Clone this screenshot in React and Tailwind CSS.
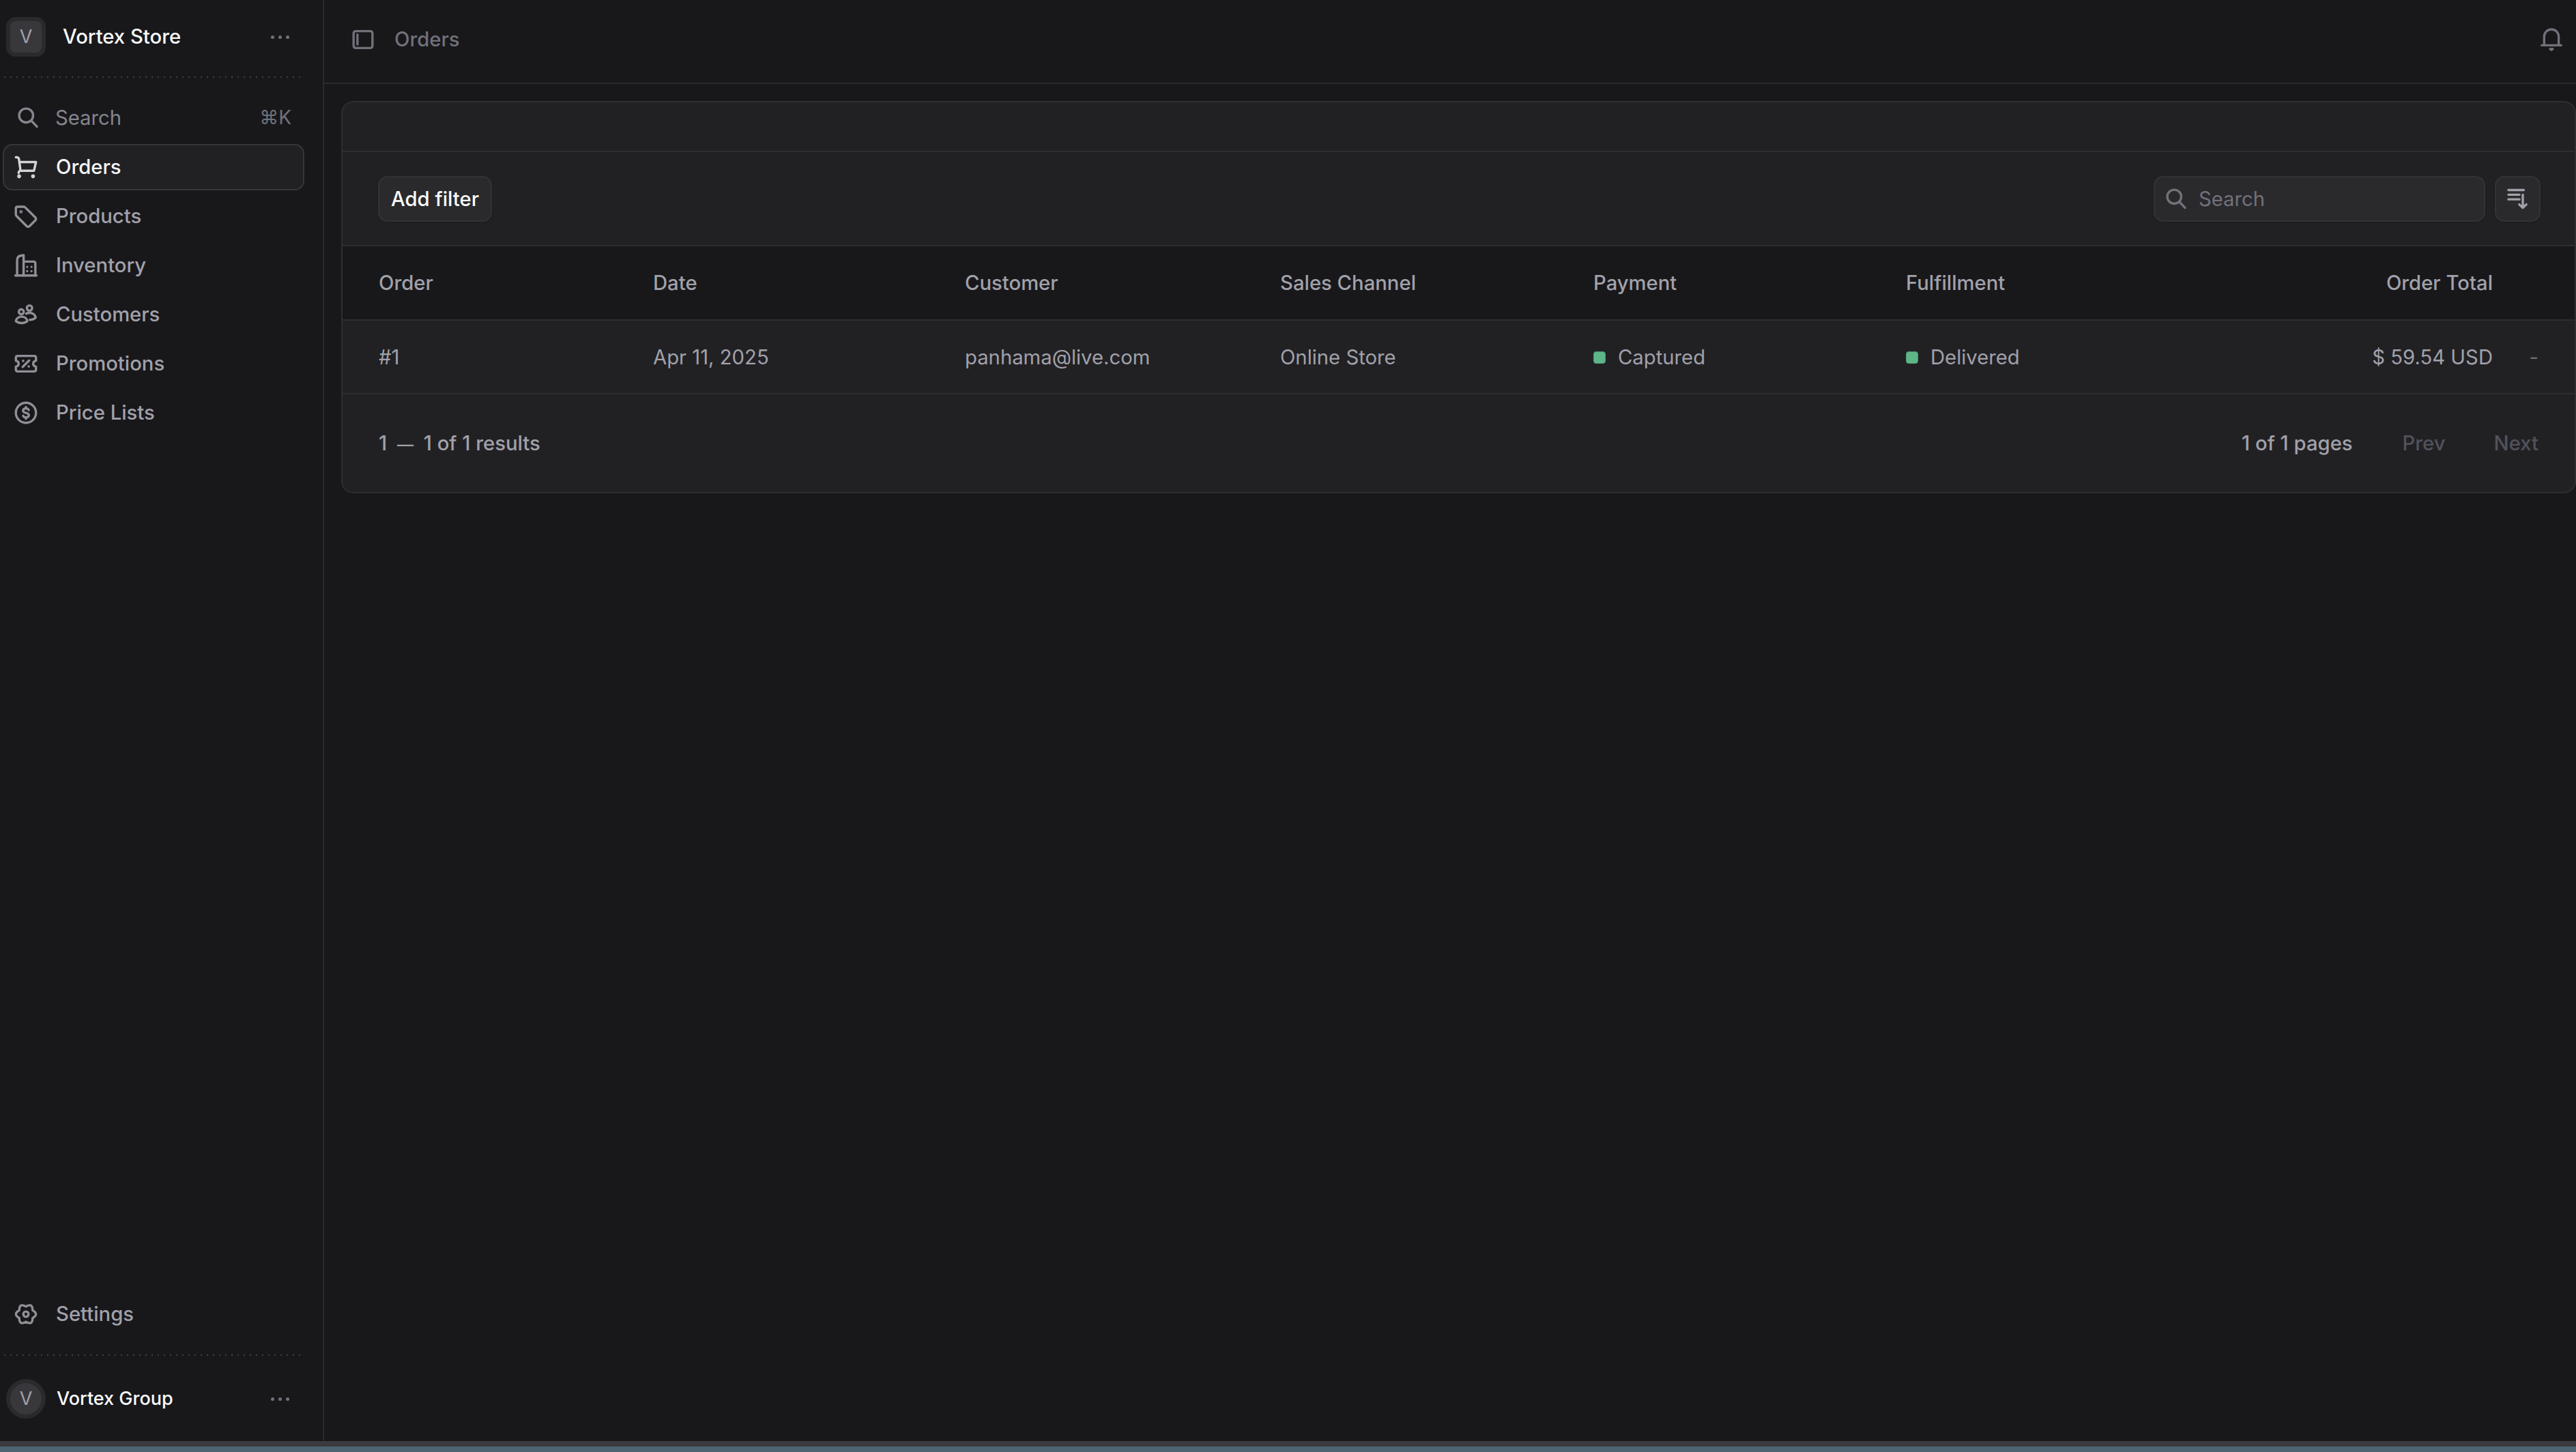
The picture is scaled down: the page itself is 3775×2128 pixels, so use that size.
import React from 'react';

// drawn on Medusa's 15x15 icon grid
const Icon = ({ className = '', children }) => (
  <svg
    viewBox="0 0 15 15"
    fill="none"
    stroke="currentColor"
    strokeWidth="1.5"
    strokeLinecap="round"
    strokeLinejoin="round"
    className={`w-[34px] h-[34px] shrink-0 ${className}`}
  >
    {children}
  </svg>
);

const SearchIcon = ({ className }) => (
  <Icon className={className}>
    <circle cx="6.300" cy="6.300" r="4.500" />
    <path d="M9.700 9.700 13.300 13.500" />
  </Icon>
);

const CartIcon = () => (
  <Icon>
    <path d="M1 1.100h.6c.7 0 1.200.5 1.400 1.200L4 9.800" />
    <path d="M3.300 4.200H14l-1.300 5.600H4c-.7 0-1.200.6-1.200 1.500" />
    <circle cx="3.100" cy="13.400" r=".5" fill="currentColor" />
    <circle cx="12.100" cy="13.400" r=".5" fill="currentColor" />
  </Icon>
);

const TagIcon = () => (
  <Icon>
    <path d="M2 1.300h4c.4 0 .7.1 1 .4l6.600 6.600c.5.5.5 1.300 0 1.800l-3.800 3.800c-.5.5-1.300.5-1.800 0L1.400 7.300C1.100 7 1 6.700 1 6.300v-4c0-.6.4-1 1-1z" />
    <circle cx="4.300" cy="4.600" r=".3" fill="currentColor" />
  </Icon>
);

const BuildingsIcon = () => (
  <Icon>
    <path d="M.7 14h13.600" />
    <path d="M1.800 14V4.200c0-1.500.9-2.700 2.200-3L6 .9V14" />
    <path d="M6 5h6.500c.6 0 1.100.5 1.100 1.100V14" />
    <g stroke="none" fill="currentColor">
      <circle cx="8.300" cy="8.400" r=".7" />
      <circle cx="11.100" cy="8.400" r=".7" />
      <circle cx="8.300" cy="11.200" r=".7" />
      <circle cx="11.100" cy="11.200" r=".7" />
    </g>
  </Icon>
);

const UsersIcon = () => (
  <Icon>
    <circle cx="4.500" cy="5.700" r="1.600" />
    <circle cx="9.800" cy="3.300" r="1.700" />
    <path d="M1 11.700c.3-1.700 1.800-2.800 3.700-2.800s3.400 1.100 3.700 2.800c-.9.900-2.200 1.300-3.700 1.300S1.900 12.600 1 11.700z" />
    <path d="M7.700 6.900c.6-.3 1.300-.5 2-.5 2.100 0 3.700 1.300 4.100 3-.5.700-2 1.400-3.800 1.500" />
  </Icon>
);

const ReceiptIcon = () => (
  <Icon>
    <path d="M2.200 2.500h10.600c.7 0 1.200.5 1.200 1.200v1.900c-1 .2-1.800 1-1.800 1.900s.8 1.700 1.800 1.900v1.900c0 .7-.5 1.200-1.200 1.200H2.200c-.7 0-1.200-.5-1.200-1.200V9.400c1-.2 1.800-1 1.800-1.900S2 5.800 1 5.600V3.700c0-.7.5-1.200 1.200-1.200z" />
    <path d="M5.400 9.600 9.600 5.400" />
    <g stroke="none" fill="currentColor">
      <circle cx="5.700" cy="5.700" r=".8" />
      <circle cx="9.300" cy="9.300" r=".8" />
    </g>
  </Icon>
);

const DollarIcon = () => (
  <Icon>
    <circle cx="7.500" cy="7.500" r="6.500" />
    <path d="M9.300 5.700c-.3-.7-1-1.100-1.800-1.100-1 0-1.900.6-1.900 1.500 0 2 3.800 1 3.800 2.900 0 .9-.9 1.500-1.900 1.500-.8 0-1.500-.4-1.800-1.100" />
    <path d="M7.500 3.700v.9M7.500 10.500v.9" />
  </Icon>
);

const CogIcon = () => (
  <Icon>
    <path d="M7.500 2.500Q11.800.05 11.800 5Q16.100 7.500 11.800 10Q11.800 14.950 7.500 12.500Q3.200 14.950 3.200 10Q-1.100 7.500 3.200 5Q3.200.05 7.500 2.500z" />
    <circle cx="7.500" cy="7.500" r="1.700" />
  </Icon>
);

const SidebarIcon = () => (
  <Icon>
    <rect x="1.400" y="2.050" width="12.200" height="10.900" rx="1.400" />
    <path d="M3.900 4.300v6.300" />
  </Icon>
);

const BellIcon = () => (
  <Icon>
    <path d="M2.800 11.200V5.600a4.700 4.700 0 0 1 9.400 0v5.600" />
    <path d="M1.200 11.200h12.600" />
    <path d="M6.700 13.500h1.600l-.8.700z" fill="currentColor" />
  </Icon>
);

const SortIcon = () => (
  <Icon>
    <path d="M1.300 2h9.900M1.300 5h7.100M1.300 8h7.100" />
    <path d="M10.600 5v8.500M8.300 11.300l2.300 2.200 2.300-2.200" />
  </Icon>
);

const Dots = () => (
  <div className="flex items-center gap-[6px] text-[#71717a]">
    <span className="w-[5px] h-[5px] rounded-full bg-current"></span>
    <span className="w-[5px] h-[5px] rounded-full bg-current"></span>
    <span className="w-[5px] h-[5px] rounded-full bg-current"></span>
  </div>
);

const DottedLine = () => (
  <div className="h-[2px] ml-[6px] mr-[32px] bg-[linear-gradient(90deg,#3f3f46_2px,transparent_2px)] bg-[length:9px_2px]"></div>
);

const NavItem = ({ icon, label, active }) => (
  <div
    className={`flex items-center h-[68px] ml-[4px] mr-[27px] pl-[15px] gap-[27px] rounded-[14px] border-2 font-medium ${
      active
        ? 'bg-[#212124] border-[#36363a] text-[#f4f4f5]'
        : 'border-transparent text-[#a1a1aa]'
    }`}
  >
    <span className={active ? 'text-[#d4d4d8]' : 'text-[#8f8f96]'}>{icon}</span>
    {label}
  </div>
);

const columns = 'grid grid-cols-[402px_457px_462px_459px_458px_400px_minmax(0,1fr)_67px] items-center pl-[53px] pr-[53px]';

const StatusCell = ({ label }) => (
  <div className="flex items-center gap-[18px]">
    <span className="w-[18px] h-[18px] rounded-[4px] bg-[#5eb587] border border-[#4a9a70]"></span>
    {label}
  </div>
);

const App = () => {
  const navItems = [
    { icon: <TagIcon />, label: 'Products' },
    { icon: <BuildingsIcon />, label: 'Inventory' },
    { icon: <UsersIcon />, label: 'Customers' },
    { icon: <ReceiptIcon />, label: 'Promotions' },
    { icon: <DollarIcon />, label: 'Price Lists' },
  ];

  return (
    <div className="w-[3775px] h-[2128px] flex flex-col overflow-hidden bg-[#18181b] font-['Inter',sans-serif] text-[29.25px] font-medium text-[#a1a1aa]">
      <div className="flex flex-1 min-h-0">
        {/* sidebar */}
        <aside className="w-[475px] shrink-0 flex flex-col border-r-2 border-[#2a2a2d]">
          <div className="h-[112px] flex items-start pt-[25px] pl-[9px] pr-[49px]">
            <div className="w-[58px] h-[58px] rounded-[14px] border-[6px] border-[#2a2a2d] bg-[#38383c] flex items-center justify-center text-[27px] font-normal text-[#a1a1aa]">
              V
            </div>
            <span className="ml-[25px] flex-1 leading-[58px] text-[#fafafa]">Vortex Store</span>
            <div className="h-[58px] flex items-center"><Dots /></div>
          </div>
          <DottedLine />
          <div className="flex items-center h-[68px] mt-[24px] pl-[24px] pr-[46px] gap-[23px] text-[#85858d] font-normal">
            <SearchIcon />
            <span className="flex-1 pt-[1px]">Search</span>
            <span className="text-[#71717a] text-[28px]">⌘K</span>
          </div>
          <div className="flex flex-col gap-[4px] mt-[5px]">
            <NavItem active icon={<CartIcon />} label="Orders" />
            {navItems.map((item) => (
              <NavItem key={item.label} icon={item.icon} label={item.label} />
            ))}
          </div>
          <div className="mt-auto">
            <NavItem icon={<CogIcon />} label="Settings" />
            <div className="mt-[25px]"><DottedLine /></div>
            <div className="h-[125px] flex items-start pt-[34px] pl-[9px] pr-[49px]">
              <div className="w-[58px] h-[58px] rounded-full border-[6px] border-[#2a2a2d] bg-[#38383c] flex items-center justify-center text-[27px] font-normal text-[#a1a1aa]">
                V
              </div>
              <span className="ml-[16px] flex-1 leading-[58px] text-[27px] text-[#fafafa]">Vortex Group</span>
              <div className="h-[58px] flex items-center"><Dots /></div>
            </div>
          </div>
        </aside>

        {/* content */}
        <main className="flex-1 min-w-0 flex flex-col">
          <header className="h-[123px] shrink-0 flex items-center justify-between border-b-2 border-[#2a2a2d] pb-[6px] pl-[40px] pr-[19px] text-[#71717a]">
            <div className="flex items-center gap-[29px]">
              <SidebarIcon />
              <span>Orders</span>
            </div>
            <BellIcon />
          </header>

          <div className="pt-[25px] pl-[25px]">
            <div className="rounded-[18px] border-2 border-[#2e2e32] bg-[#212124] overflow-hidden">
              <div className="h-[73px] border-b-2 border-[#2e2e32]"></div>

              <div className="h-[138px] flex items-center justify-between border-b-2 border-[#2e2e32] pl-[52px] pr-[50px]">
                <button className="h-[67px] px-[17px] pt-[1px] rounded-[14px] border-2 border-[#333337] bg-[#2a2a2d] shadow-sm text-[#fafafa]">
                  Add filter
                </button>
                <div className="flex items-center gap-[14px]">
                  <div className="w-[486px] h-[67px] flex items-center gap-[16px] pl-[14px] rounded-[14px] border-2 border-[#333337] bg-[#2a2a2d] shadow-sm text-[#71717a] font-normal">
                    <SearchIcon />
                    <span className="pt-[1px]">Search</span>
                  </div>
                  <div className="w-[67px] h-[67px] flex items-center justify-center rounded-[14px] border-2 border-[#333337] bg-[#2a2a2d] shadow-sm text-[#a1a1aa]">
                    <SortIcon />
                  </div>
                </div>
              </div>

              <div className={`${columns} h-[109px] bg-[#18181b] border-b-2 border-[#2e2e32]`}>
                <div>Order</div>
                <div>Date</div>
                <div>Customer</div>
                <div>Sales Channel</div>
                <div>Payment</div>
                <div>Fulfillment</div>
                <div className="text-right">Order Total</div>
                <div></div>
              </div>

              <div className={`${columns} h-[108px] pt-[1px] border-b-2 border-[#2e2e32] font-normal`}>
                <div>#1</div>
                <div>Apr 11, 2025</div>
                <div>panhama@live.com</div>
                <div>Online Store</div>
                <StatusCell label="Captured" />
                <StatusCell label="Delivered" />
                <div className="text-right">$ 59.54 USD</div>
                <div className="text-right text-[#71717a]">-</div>
              </div>

              <div className="h-[143px] pt-[1px] flex items-center justify-between pl-[53px] pr-[53px]">
                <span>
                  1 <span className="text-[24px] mx-[7px]">—</span> 1 of 1 results
                </span>
                <div className="flex items-center gap-[73px]">
                  <span>1 of 1 pages</span>
                  <div className="flex items-center gap-[71px] text-[#52525b]">
                    <span>Prev</span>
                    <span>Next</span>
                  </div>
                </div>
              </div>
            </div>
          </div>
        </main>
      </div>

      {/* window edge at the bottom of the capture */}
      <div className="h-[8px] shrink-0 bg-[#3b3b3d]"></div>
      <div className="h-[8px] shrink-0 bg-[#4d6473]"></div>
    </div>
  );
};

export default App;
